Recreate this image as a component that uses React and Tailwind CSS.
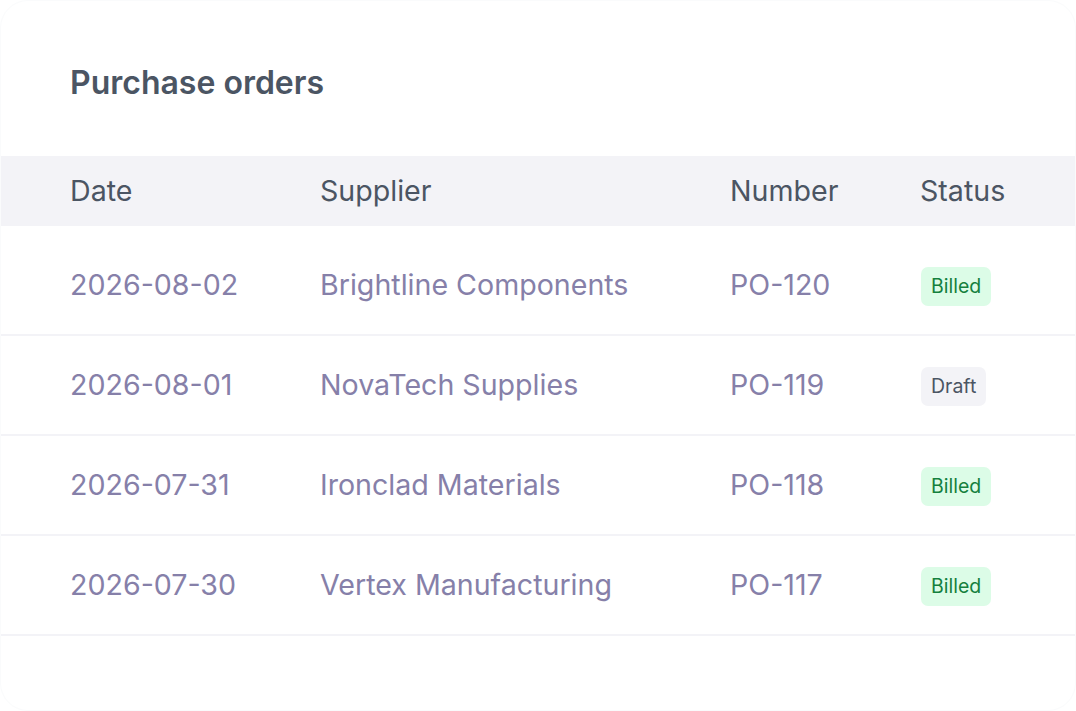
import React from 'react';

const orders = [
  { date: '2026-08-02', supplier: 'Brightline Components', number: 'PO-120', status: 'Billed' },
  { date: '2026-08-01', supplier: 'NovaTech Supplies', number: 'PO-119', status: 'Draft' },
  { date: '2026-07-31', supplier: 'Ironclad Materials', number: 'PO-118', status: 'Billed' },
  { date: '2026-07-30', supplier: 'Vertex Manufacturing', number: 'PO-117', status: 'Billed' },
];

const StatusBadge = ({ status }) => {
  const billed = status === 'Billed';
  return (
    <span
      className={`inline-flex items-center h-[39px] px-[10px] rounded-[7px] text-[19.5px] ${
        billed ? 'bg-[#dcfce7] text-[#15803d]' : 'bg-[#f3f3f7] text-[#4b5563]'
      }`}
    >
      {status}
    </span>
  );
};

const App = () => {
  return (
    <div className="w-[1076px] h-[711px] bg-white font-['Inter','Noto_Sans',sans-serif]">
      <div className="h-full w-full rounded-[28px] border border-[#fafbfc] overflow-hidden">
        {/* Titulo */}
        <h1 className="pl-[69px] pt-[62px] h-[155px] text-[32px] leading-[40px] font-semibold text-[#4b5563]">
          Purchase orders
        </h1>

        {/* Cabecera */}
        <div className="grid grid-cols-[250px_410px_190px_1fr] pl-[69px] h-[70px] items-center bg-[#f3f3f7] text-[28.6px] text-[#4b5563]">
          <span>Date</span>
          <span>Supplier</span>
          <span>Number</span>
          <span>Status</span>
        </div>

        {/* Filas */}
        <div className="mt-[10px]">
          {orders.map((o, i) => (
            <div
              key={i}
              className="grid grid-cols-[250px_410px_190px_1fr] pl-[69px] h-[100px] items-center border-b-2 border-[#f3f3f7] text-[28.6px] text-[#8680a9]"
            >
              <span>{o.date}</span>
              <span>{o.supplier}</span>
              <span>{o.number}</span>
              <span className="pl-[1px] pb-[2px]">
                <StatusBadge status={o.status} />
              </span>
            </div>
          ))}
        </div>
      </div>
    </div>
  );
};

export default App;
